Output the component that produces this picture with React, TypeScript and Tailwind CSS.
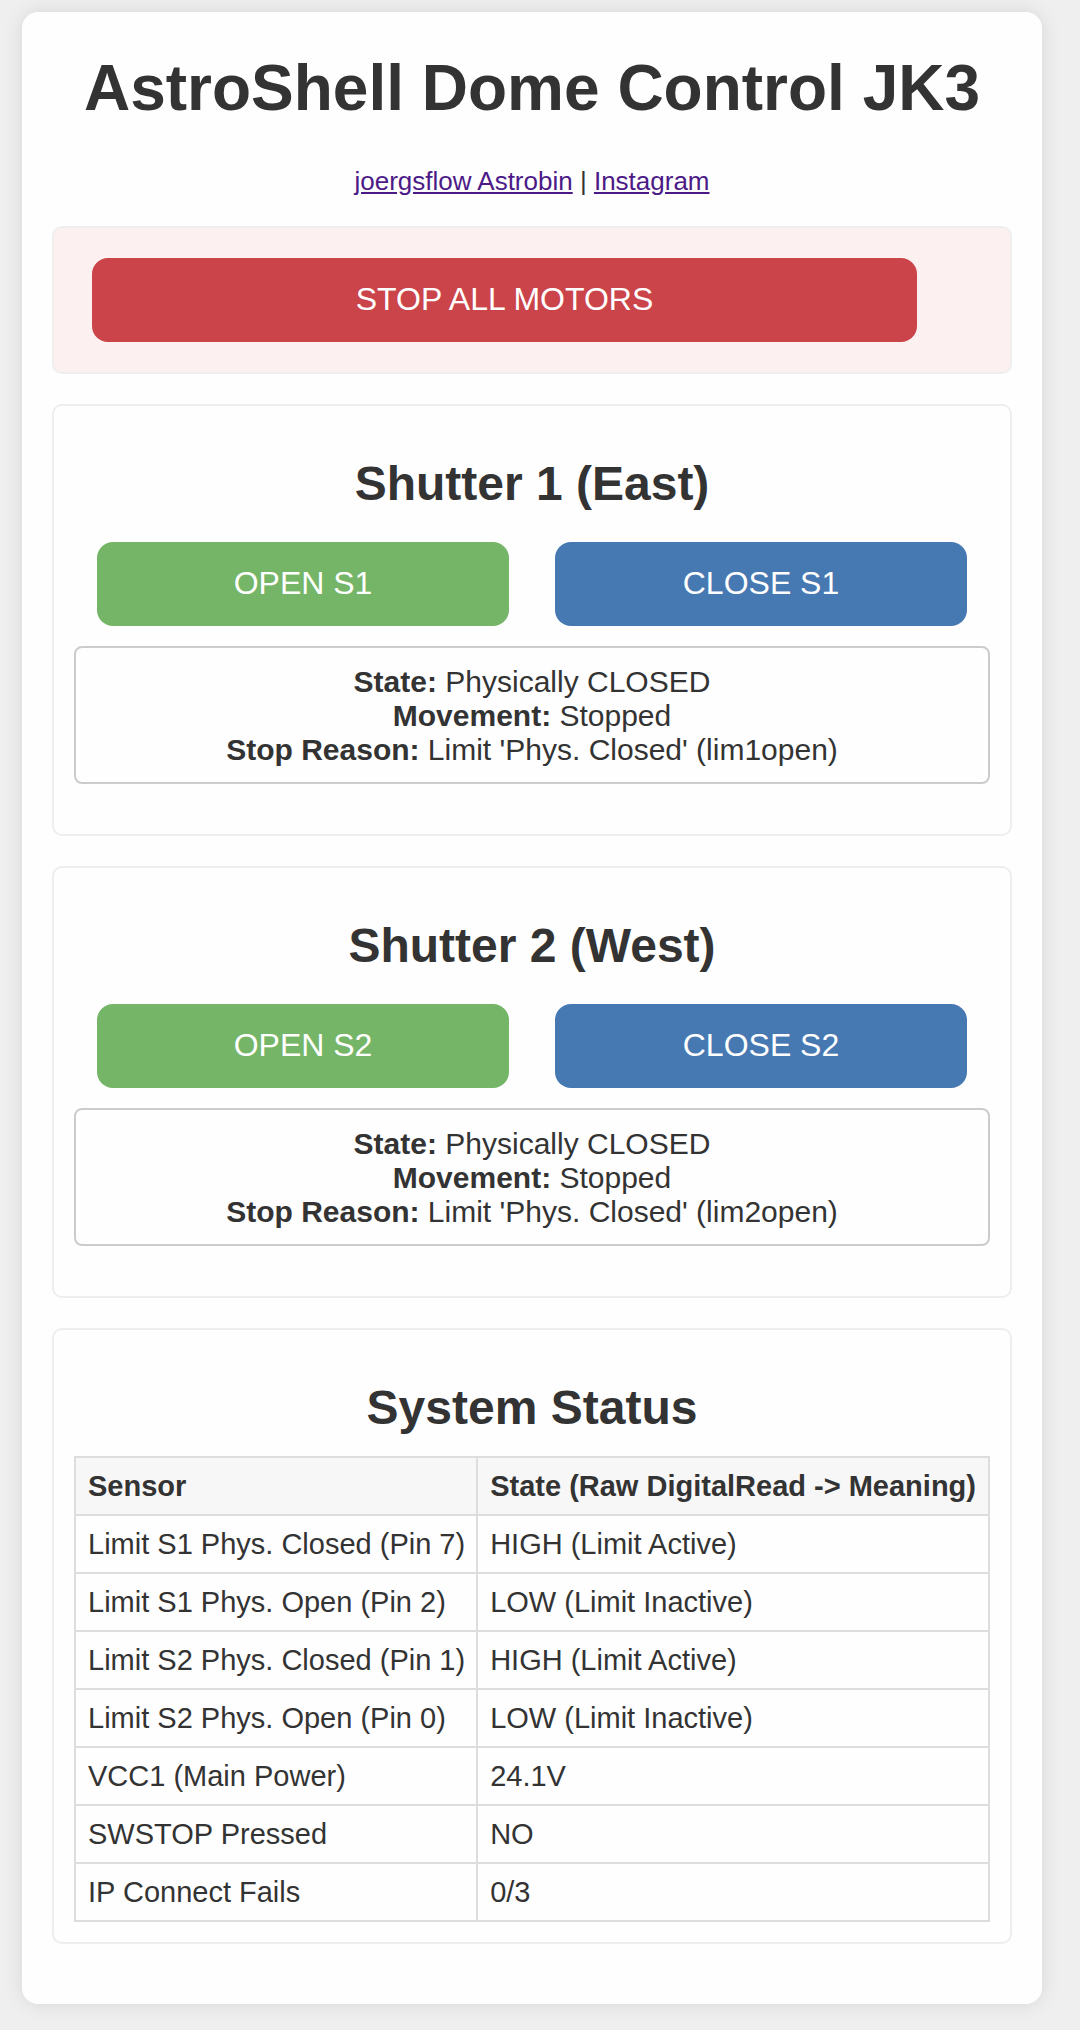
import type { ReactNode } from "react";

const sensors = [
  ["Limit S1 Phys. Closed (Pin 7)", "HIGH (Limit Active)"],
  ["Limit S1 Phys. Open (Pin 2)", "LOW (Limit Inactive)"],
  ["Limit S2 Phys. Closed (Pin 1)", "HIGH (Limit Active)"],
  ["Limit S2 Phys. Open (Pin 0)", "LOW (Limit Inactive)"],
  ["VCC1 (Main Power)", "24.1V"],
  ["SWSTOP Pressed", "NO"],
  ["IP Connect Fails", "0/3"],
];

function Panel({ title, children }: { title: string; children: ReactNode }) {
  return (
    <section className="rounded-[10px] border-2 border-[#eeeeee] p-5">
      <h2 className="mt-[30px] text-center text-[48px] leading-[56px] font-bold">{title}</h2>
      {children}
    </section>
  );
}

function Shutter({ id, side }: { id: number; side: string }) {
  return (
    <Panel title={`Shutter ${id} (${side})`}>
      <div className="mt-[30px] flex justify-around">
        <button type="button" className="w-[45%] rounded-2xl bg-[#75b567] pt-[23px] pb-[25px] text-[32px] leading-9 text-white">
          OPEN S{id}
        </button>
        <button type="button" className="w-[45%] rounded-2xl bg-[#4678b2] pt-[23px] pb-[25px] text-[32px] leading-9 text-white">
          CLOSE S{id}
        </button>
      </div>
      <div className="mt-5 mb-[30px] rounded-lg border-2 border-[#cccccc] px-4 pt-[17px] pb-[15px] text-center text-[30px] leading-[34px]">
        <p><strong>State:</strong> Physically CLOSED</p>
        <p><strong>Movement:</strong> Stopped</p>
        <p><strong>Stop Reason:</strong> Limit 'Phys. Closed' (lim{id}open)</p>
      </div>
    </Panel>
  );
}

export default function App() {
  return (
    <div className="min-h-screen bg-[#efefef] pt-3 pr-[38px] pb-[26px] pl-[22px] font-['Liberation_Sans',Arial,sans-serif] text-[#333333]">
      <main className="rounded-2xl bg-[#fefefe] px-[30px] pt-9 pb-[60px] shadow-[0_0_20px_rgba(0,0,0,0.1)]">
        <h1 className="text-center text-[64px] leading-[80px] font-bold">AstroShell Dome Control JK3</h1>
        <nav className="mt-[38px] text-center text-[26px] leading-[30px]">
          <a href="#astrobin" className="text-[#4c1a87] underline">joergsflow Astrobin</a>
          {" | "}
          <a href="#instagram" className="text-[#4c1a87] underline">Instagram</a>
        </nav>
        <div className="mt-[30px] flex flex-col gap-[30px]">
          <section className="rounded-[10px] border-2 border-[#eeeeee] bg-[#fcf0f0] px-5 py-[30px]">
            <button type="button" className="ml-[2%] block w-[90%] rounded-2xl bg-[#cb444a] pt-[23px] pb-[25px] text-[32px] leading-9 text-white">
              STOP ALL MOTORS
            </button>
          </section>
          <Shutter id={1} side="East" />
          <Shutter id={2} side="West" />
          <Panel title="System Status">
            <table className="mt-5 w-full border-collapse text-left text-[29px] leading-8 whitespace-nowrap">
              <thead className="bg-[#f7f7f7]">
                <tr>
                  <th scope="col" className="w-[44%] border-2 border-[#dddddd] py-3 pr-2 pl-3">Sensor</th>
                  <th scope="col" className="border-2 border-[#dddddd] py-3 pr-2 pl-3">State (Raw DigitalRead -&gt; Meaning)</th>
                </tr>
              </thead>
              <tbody>
                {sensors.map(([name, state]) => (
                  <tr key={name}>
                    <td className="border-2 border-[#dddddd] py-3 pr-2 pl-3">{name}</td>
                    <td className="border-2 border-[#dddddd] py-3 pr-2 pl-3">{state}</td>
                  </tr>
                ))}
              </tbody>
            </table>
          </Panel>
        </div>
      </main>
    </div>
  );
}
